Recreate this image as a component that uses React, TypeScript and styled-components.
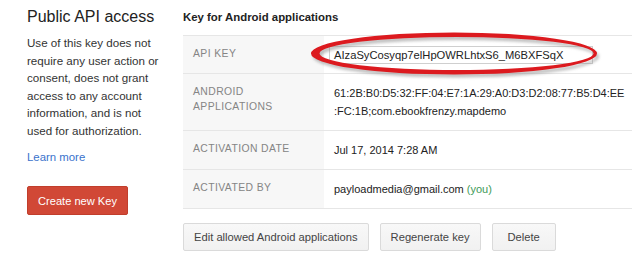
import React from "react";
import styled, { createGlobalStyle } from "styled-components";

const GlobalStyle = createGlobalStyle`
  body {
    margin: 0;
    background: #fff;
    font-family: "Liberation Sans", Arial, sans-serif;
    color: #222;
  }
`;

const Page = styled.div`
  display: flex;
  width: 640px;
  height: 258px;
  padding-left: 27px;
  box-sizing: border-box;
  overflow: hidden;
`;

const Sidebar = styled.div`
  width: 140px;
  margin-right: 16px;
  flex-shrink: 0;
`;

const Title = styled.h2`
  margin: 0;
  padding-top: 7px;
  font-size: 16px;
  font-weight: normal;
  line-height: 20px;
  color: #222;
`;

const Description = styled.p`
  margin: 7px 0 0;
  font-size: 11.6px;
  line-height: 17.6px;
  color: #333;
`;

const LearnMore = styled.a`
  display: block;
  margin-top: 9px;
  font-size: 11.4px;
  line-height: 17.6px;
  color: #3a72cc;
  text-decoration: none;
`;

const CreateButton = styled.button`
  margin-top: 20px;
  height: 29px;
  padding: 0 10px;
  border: 1px solid #c13e2c;
  border-radius: 2px;
  background: #d14836;
  color: #fff;
  font-family: inherit;
  font-size: 11.1px;
`;

const Main = styled.div`
  width: 449px;
`;

const Heading = styled.div`
  padding-top: 8px;
  font-size: 11.4px;
  font-weight: bold;
  line-height: 18px;
  color: #222;
`;

const Table = styled.div`
  margin-top: 9px;
  border-top: 1px solid #e6e6e6;
`;

const Row = styled.div`
  display: grid;
  grid-template-columns: 141px 1fr;
  border-bottom: 1px solid #e6e6e6;
`;

const Label = styled.div`
  padding: 10px 10px;
  background: #f7f7f7;
  font-size: 10.4px;
  letter-spacing: 0.4px;
  line-height: 15px;
  color: #858585;
  text-transform: uppercase;
`;

const Value = styled.div<{ $keyCell?: boolean }>`
  position: relative;
  padding: ${(p) => (p.$keyCell ? "9px 10px 9px 5px" : "10px 10px")};
  font-size: 11px;
  line-height: 18px;
  color: #222;
`;

const KeyBox = styled.div`
  width: 258px;
  padding-left: 4px;
  margin-top: 1px;
  border: 1px solid #cfcfcf;
  font-size: 11.2px;
  line-height: 16px;
`;

const You = styled.span`
  color: #3e9a58;
`;

const Marker = styled.svg`
  position: absolute;
  left: -16px;
  top: -6px;
  overflow: visible;
  pointer-events: none;
`;

const Actions = styled.div`
  display: flex;
  gap: 11px;
  margin-top: 14px;
`;

const ActionButton = styled.button`
  height: 28px;
  min-width: 64px;
  padding: 0 10px;
  border: 1px solid #dadada;
  border-radius: 2px;
  background: linear-gradient(#f8f8f8, #f1f1f1);
  color: #444;
  font-family: inherit;
  font-size: 11.2px;
`;

const ellipse = (cx: number, cy: number, rx: number, ry: number) =>
  `M${cx - rx},${cy} a${rx},${ry} 0 1,0 ${rx * 2},0 a${rx},${ry} 0 1,0 ${-rx * 2},0 Z`;

const RedCircle: React.FC = () => {
  const d = ellipse(146, 23.5, 143, 21) + " " + ellipse(148.5, 23.5, 137, 16.5);
  return (
    <Marker width="300" height="50" viewBox="0 0 300 50">
      <defs>
        <filter id="shade" x="-10%" y="-30%" width="120%" height="160%">
          <feGaussianBlur stdDeviation="1.5" />
        </filter>
      </defs>
      <path d={d} fill="#888" fillRule="evenodd" opacity="0.55" transform="translate(2,3)" filter="url(#shade)" />
      <path d={d} fill="#dc1a1f" fillRule="evenodd" />
    </Marker>
  );
};

const App: React.FC = () => {
  return (
    <Page>
      <GlobalStyle />
      <Sidebar>
        <Title>Public API access</Title>
        <Description>
          Use of this key does not require any user action or consent, does not grant access to
          any account information, and is not used for authorization.
        </Description>
        <LearnMore href="#">Learn more</LearnMore>
        <CreateButton>Create new Key</CreateButton>
      </Sidebar>
      <Main>
        <Heading>Key for Android applications</Heading>
        <Table>
          <Row>
            <Label>API key</Label>
            <Value $keyCell>
              <KeyBox>AIzaSyCosyqp7elHpOWRLhtxS6_M6BXFSqX</KeyBox>
              <RedCircle />
            </Value>
          </Row>
          <Row>
            <Label>
              Android
              <br />
              applications
            </Label>
            <Value>
              61:2B:B0:D5:32:FF:04:E7:1A:29:A0:D3:D2:08:77:B5:D4:EE
              <br />
              :FC:1B;com.ebookfrenzy.mapdemo
            </Value>
          </Row>
          <Row>
            <Label>Activation date</Label>
            <Value>Jul 17, 2014 7:28 AM</Value>
          </Row>
          <Row>
            <Label>Activated by</Label>
            <Value>
              payloadmedia@gmail.com <You>(you)</You>
            </Value>
          </Row>
        </Table>
        <Actions>
          <ActionButton>Edit allowed Android applications</ActionButton>
          <ActionButton>Regenerate key</ActionButton>
          <ActionButton>Delete</ActionButton>
        </Actions>
      </Main>
    </Page>
  );
};

export default App;
